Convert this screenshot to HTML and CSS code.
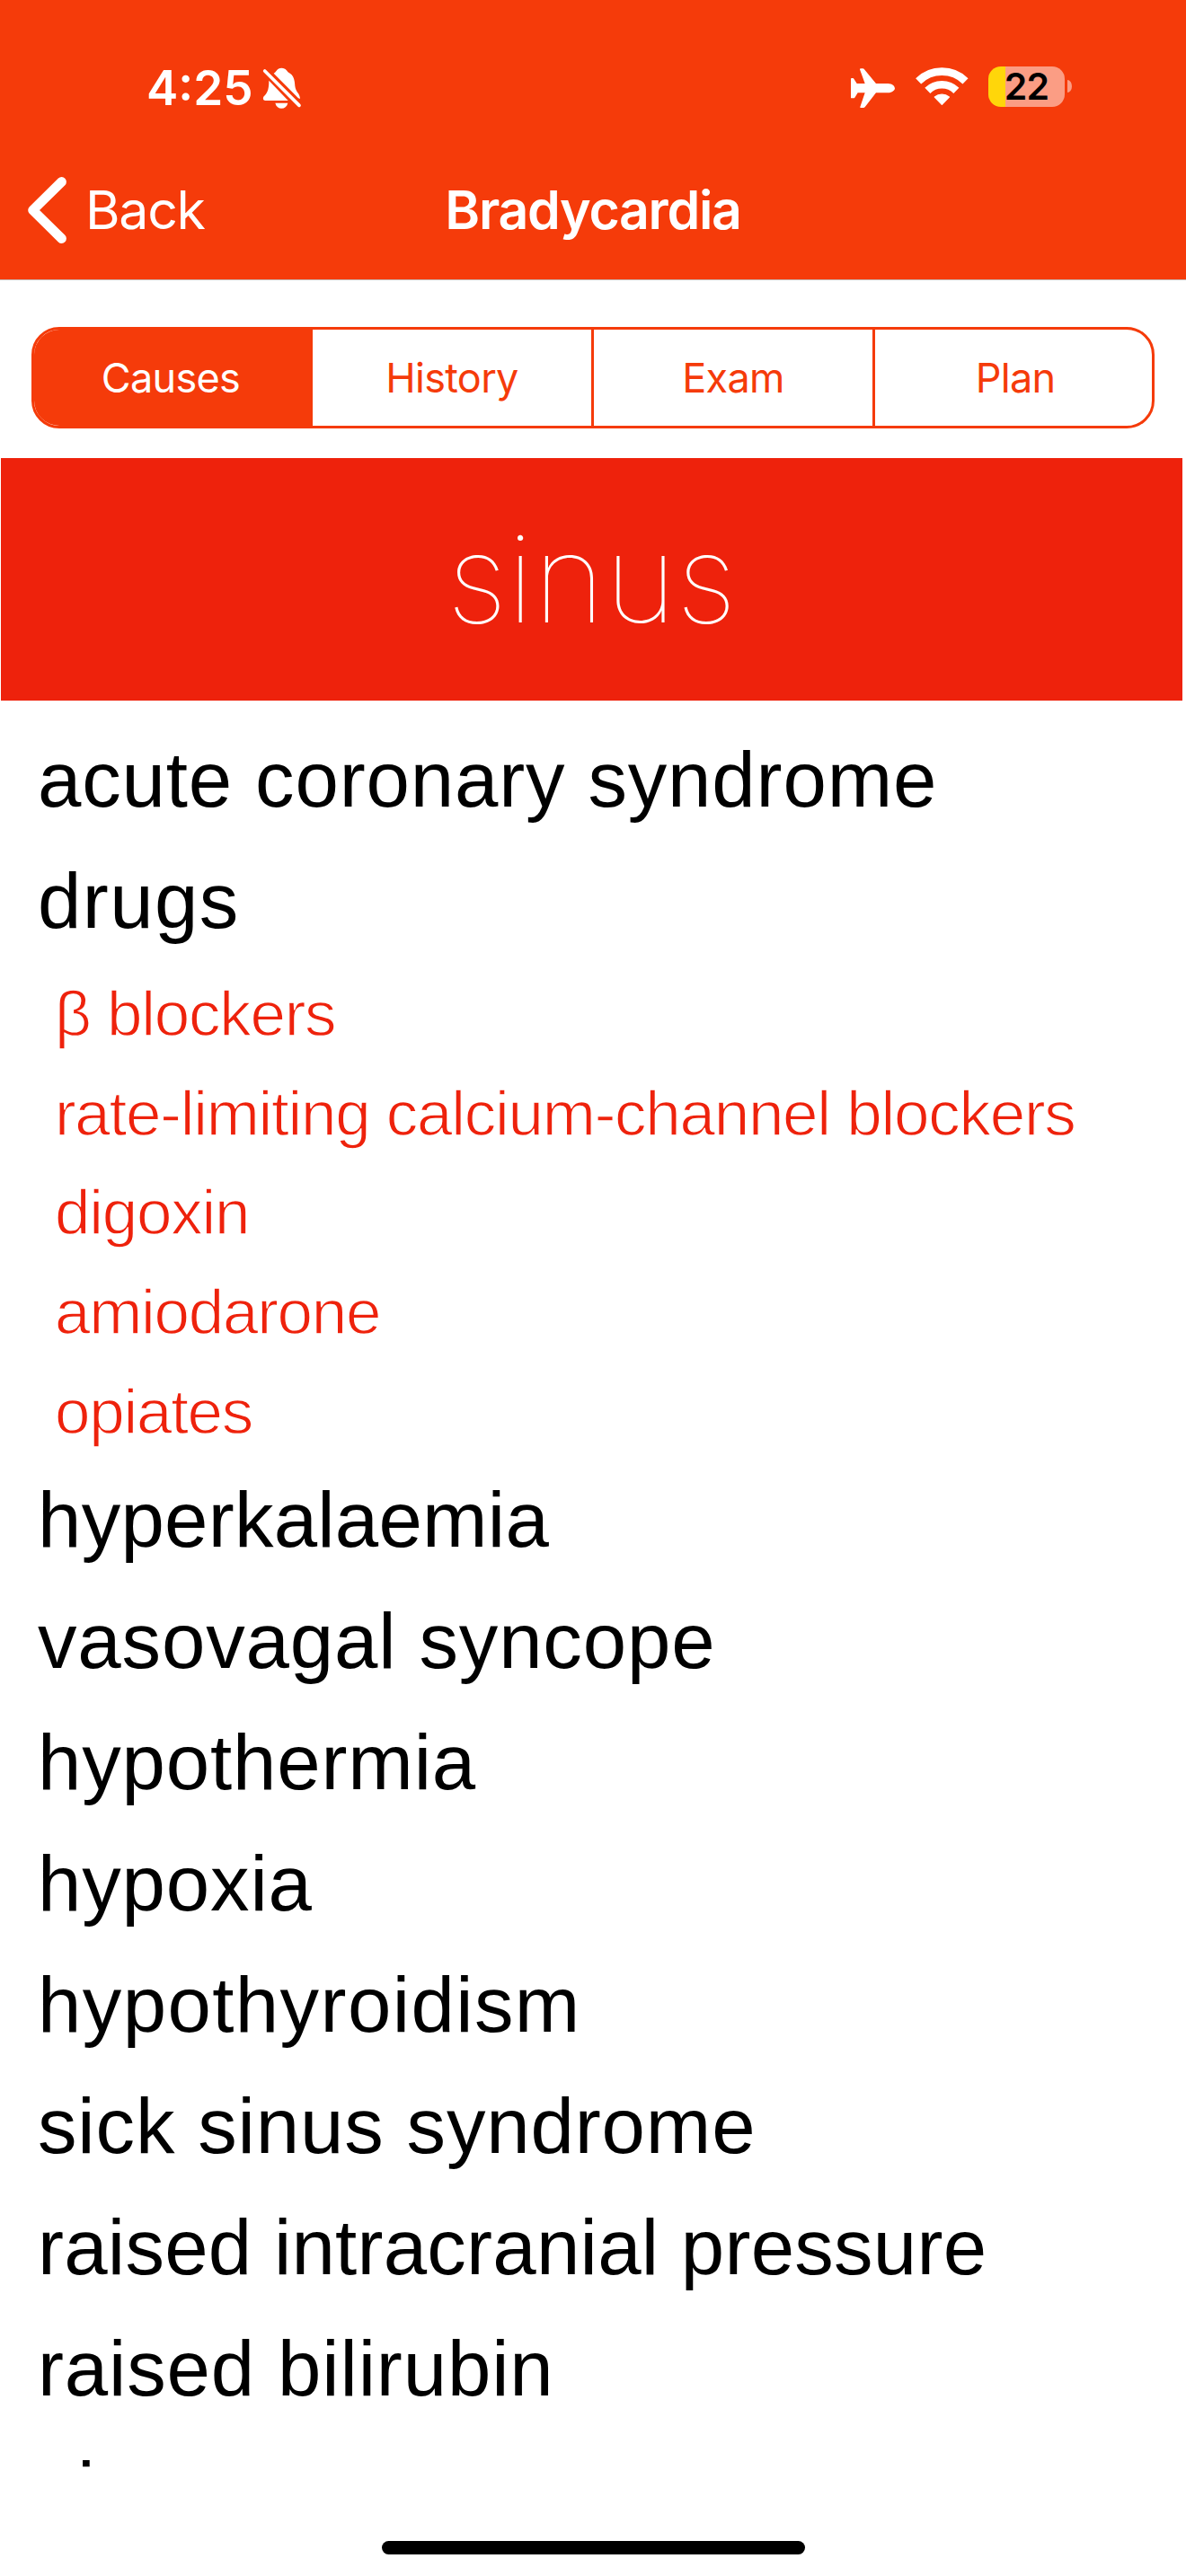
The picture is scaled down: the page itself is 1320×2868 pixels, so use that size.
FILE: index.html
```html
<!DOCTYPE html>
<html lang="en">
<head>
<meta charset="utf-8">
<title>Bradycardia</title>
<link rel="stylesheet" href="styles.css">
</head>
<body>
<div class="screen">
  <header class="header">
    <div class="status">
      <div class="status-left">
        <span class="time">4:25</span>
        <svg class="bell" viewBox="450 66 144 156" fill="#fff">
          <path d="M494 95C503 91 504 77 520 77C536 77 538 89 545 93C561 102 564 117 565 137C567 158 582 161 582 180L576 178Z"/>
          <path d="M478 119L542 186H466C458 186 457 177 461 172C470 162 478 155 478 119Z"/>
          <path d="M499 194H541C538 206 530 212 520 212C510 212 502 206 499 194Z"/>
          <path d="M464 87L579 202" stroke="#fff" stroke-width="11" stroke-linecap="round"/>
        </svg>
      </div>
      <div class="status-right">
        <svg class="plane" viewBox="81 78 148 134" fill="#fff">
          <path d="M81 113Q81 111 84 111H88Q90 111 91 113L101 129H128L111 82Q111 79 114 79H121Q124 79 126 82L165 129H205C219 129 228 138 228 145C228 152 219 160 205 160H165L129 206Q126 210 123 210H114Q111 210 112 207L128 160H104L94 176Q92 178 90 178H84Q81 178 81 176Z"/>
        </svg>
        <svg class="wifi" viewBox="297 72 177 132" fill="none" stroke="#fff">
          <path d="M306.500 121A112.500 112.500 0 0 1 463.500 121" stroke-width="26"/>
          <path d="M337 152.500A68.500 68.500 0 0 1 433 152.500" stroke-width="26"/>
          <path d="M361 174A38 38 0 0 1 409 174L385 199Z" fill="#fff" stroke-width="4" stroke-linejoin="round"/>
        </svg>
        <div class="battery"><span class="charge">22</span></div>
        <div class="battery-tip"></div>
      </div>
    </div>
    <nav class="navbar">
      <a class="back">
        <svg class="chevron" viewBox="31 197 44 74" fill="none" stroke="#fff" stroke-width="10.600" stroke-linecap="round" stroke-linejoin="round">
          <path d="M68.600 202.400L36.500 234L68.600 265.600"/>
        </svg>
        <span class="back-label">Back</span>
      </a>
      <h1 class="title">Bradycardia</h1>
      <span></span>
    </nav>
  </header>
  <div class="tabs">
    <div class="tab tab-active">Causes</div>
    <div class="tab tab-divided">History</div>
    <div class="tab tab-divided">Exam</div>
    <div class="tab tab-last">Plan</div>
  </div>
  <h2 class="banner">sinus</h2>
  <ul class="list">
    <li class="cause">acute coronary syndrome</li>
    <li class="cause loose">drugs</li>
    <li class="group">
      <ul class="sublist">
        <li class="drug">β blockers</li>
        <li class="drug">rate-limiting calcium-channel blockers</li>
        <li class="drug">digoxin</li>
        <li class="drug">amiodarone</li>
        <li class="drug">opiates</li>
      </ul>
    </li>
    <li class="cause tight">hyperkalaemia</li>
    <li class="cause">vasovagal syncope</li>
    <li class="cause">hypothermia</li>
    <li class="cause">hypoxia</li>
    <li class="cause loose">hypothyroidism</li>
    <li class="cause">sick sinus syndrome</li>
    <li class="cause tight">raised intracranial pressure</li>
    <li class="cause">raised bilirubin</li>
    <li class="cause">si</li>
  </ul>
  <footer class="home"><div class="home-bar"></div></footer>
</div>
</body>
</html>
```
FILE: styles.css
```css
* { box-sizing: border-box; margin: 0; padding: 0; }
body { background: #fff; }
ul { list-style: none; }
.screen {
  width: 1320px;
  height: 2868px;
  overflow: hidden;
  display: flex;
  flex-direction: column;
  background: #fff;
  font-family: Inter, "Liberation Sans", sans-serif;
}
.header {
  height: 312px;
  flex: none;
  background: #f53b0a;
  border-bottom: 1px solid #c4b5b0;
  color: #fff;
}
.status {
  height: 156px;
  padding: 72px 127px 0 163px;
  display: flex;
  justify-content: space-between;
  align-items: flex-start;
}
.status-left, .status-right { display: flex; align-items: flex-start; }
.time {
  width: 127px;
  font-size: 53px;
  font-weight: 600;
  line-height: 52px;
  white-space: nowrap;
}
.bell { width: 48px; height: 52px; }
.plane { width: 49.300px; height: 44.700px; margin-top: 4px; }
.wifi { width: 59px; height: 44px; margin: 2px 22px 0 23px; }
.battery {
  width: 85px;
  height: 45px;
  margin-top: 2px;
  border-radius: 14px;
  background: linear-gradient(90deg, #ffd60a 19px, #fb9d84 19px);
  color: #000;
  text-align: center;
}
.charge { font-size: 41px; font-weight: 600; line-height: 45px; letter-spacing: -0.800px; }
.battery-tip {
  width: 5px;
  height: 14px;
  margin: 17px 0 0 3px;
  border-radius: 0 5px 5px 0 / 0 7px 7px 0;
  background: #fb9d84;
}
.navbar {
  height: 155px;
  display: grid;
  grid-template-columns: 1fr auto 1fr;
  align-items: start;
}
.back { display: flex; padding-left: 31px; }
.chevron { width: 44px; height: 74px; margin-top: 41px; }
.back-label { margin: 42px 0 0 20px; font-size: 59px; line-height: 72px; letter-spacing: -1.300px; }
.title { margin-top: 42px; font-size: 59px; font-weight: 600; line-height: 72px; letter-spacing: -1.300px; }
.tabs {
  flex: none;
  width: 1250px;
  height: 113px;
  margin: 52px 0 0 35px;
  display: grid;
  grid-template-columns: 310px 313px 313px 308px;
  border: 3px solid #f53b0a;
  border-radius: 31px;
  overflow: hidden;
  color: #f53b0a;
}
.tab {
  font-size: 45px;
  line-height: 107px;
  letter-spacing: -0.700px;
  text-align: center;
}
.tab-divided { border-right: 3px solid #f53b0a; }
.tab-active { padding-right: 6px; background: #f53b0a; color: #fff; }
.tab-last { padding-left: 4px; }
.banner {
  flex: none;
  width: 1315px;
  height: 270px;
  margin: 33px 0 0 1px;
  background: #ee220c;
  color: #fff;
  text-align: center;
  font-size: 136px;
  font-weight: 100;
  line-height: 268px;
}
.list {
  flex: none;
  height: 1970px;
  padding: 21px 0 0 42px;
  overflow: hidden;
  font-family: "Liberation Sans", Arial, sans-serif;
}
.cause {
  height: 134.900px;
  font-size: 87px;
  line-height: 134.900px;
  letter-spacing: 0.850px;
  white-space: nowrap;
  color: #000;
}
.loose { letter-spacing: 1.400px; }
.tight { letter-spacing: 0.250px; }
.sublist { height: 554.600px; padding: 3px 0 0 19px; }
.drug {
  height: 110.800px;
  font-size: 71px;
  line-height: 110.800px;
  letter-spacing: -1.270px;
  white-space: nowrap;
  color: #ee220c;
  -webkit-text-stroke: 1.300px #fff;
}
.home { padding-top: 79px; }
.home-bar {
  width: 471px;
  height: 15px;
  margin: 0 auto;
  border-radius: 8px;
  background: #000;
}
```
